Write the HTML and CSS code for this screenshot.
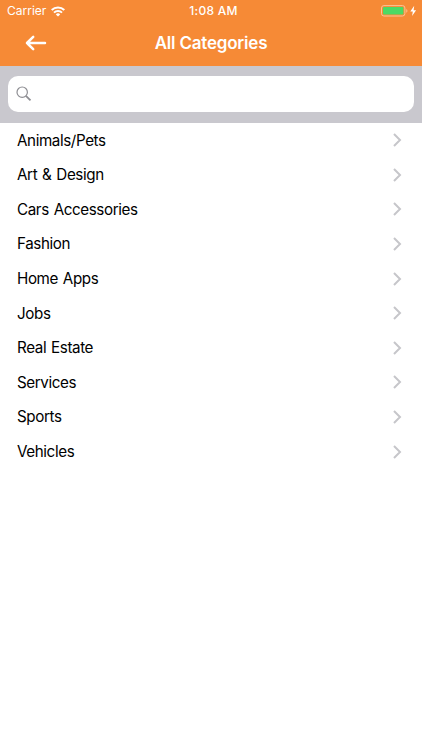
FILE: index.html
```html
<!DOCTYPE html>
<html lang="en">

<head>
  <meta charset="UTF-8" />
  <meta name="viewport" content="width=device-width, initial-scale=1.0" />
  <title>All Categories</title>
  <link rel="stylesheet" href="styles.css">
</head>

<body>
  <svg width="0" height="0" class="sprite">
    <symbol id="chevron" viewBox="0 0 9 14">
      <path d="M1 1l6 6-6 6" fill="none" stroke="#c6c6ca" stroke-width="2" />
    </symbol>
  </svg>
  <header class="header">
    <div class="status">
      <div class="carrier">
        <span>Carrier</span>
        <svg width="14" height="11" viewBox="0 0 14 11" fill="none" stroke="#fff" stroke-width="2">
          <path d="M.7 4a9 9 0 0 1 12.6 0" />
          <path d="M3 6.6a5.7 5.7 0 0 1 8 0" />
          <path d="M7 10.6L4.8 8.4a3.1 3.1 0 0 1 4.4 0z" fill="#fff" stroke="none" />
        </svg>
      </div>
      <div class="time">1:08 AM</div>
      <div class="power">
        <svg width="36" height="12" viewBox="0 0 36 12">
          <rect x=".5" y=".6" width="23.4" height="10.4" rx="2.4" fill="none" stroke="#fbc497" />
          <rect x="2" y="2" width="20.4" height="7.6" rx="1" fill="#4cd964" />
          <path d="M25.3 4v3.8c1.5-.7 1.5-3.1 0-3.8z" fill="#fbc497" />
          <path d="M33.2 .8l-3.9 5.6h2.5l-.7 4.6 4-5.8h-2.5z" fill="#fff" />
        </svg>
      </div>
    </div>
    <nav class="navbar">
      <a class="back">
        <svg width="22" height="16" viewBox="0 0 22 16" fill="none" stroke="#fff" stroke-width="2.5" stroke-linecap="round" stroke-linejoin="round">
          <path d="M20 8H2M8.2 1.8L2 8l6.2 6.2" />
        </svg>
      </a>
      <h1>All Categories</h1>
    </nav>
  </header>
  <div class="search">
    <label class="search-box">
      <svg width="16" height="16" viewBox="0 0 16 16" fill="none" stroke="#8e8e93">
        <circle cx="6.2" cy="6.2" r="5.2" stroke-width="1.2" />
        <path d="M9.9 9.9l4.6 4.5" stroke-width="1.8" />
      </svg>
      <input type="text" />
    </label>
  </div>
  <ul class="categories">
    <li><span>Animals/Pets</span><svg><use href="#chevron" /></svg></li>
    <li><span>Art &amp; Design</span><svg><use href="#chevron" /></svg></li>
    <li><span>Cars Accessories</span><svg><use href="#chevron" /></svg></li>
    <li><span>Fashion</span><svg><use href="#chevron" /></svg></li>
    <li><span>Home Apps</span><svg><use href="#chevron" /></svg></li>
    <li><span>Jobs</span><svg><use href="#chevron" /></svg></li>
    <li><span>Real Estate</span><svg><use href="#chevron" /></svg></li>
    <li><span>Services</span><svg><use href="#chevron" /></svg></li>
    <li><span>Sports</span><svg><use href="#chevron" /></svg></li>
    <li><span>Vehicles</span><svg><use href="#chevron" /></svg></li>
  </ul>
</body>

</html>
```
FILE: styles.css
```css
* {
  box-sizing: border-box;
}

body {
  margin: 0;
  background-color: #fff;
  color: #000;
  font-family: Inter, "Liberation Sans", sans-serif;
}

svg {
  display: block;
  flex: none;
}

.sprite {
  position: absolute;
}

.header {
  height: 66px;
  background-color: #f68a36;
  color: #fff;
}

.status {
  display: grid;
  grid-template-columns: 1fr auto 1fr;
  align-items: center;
  height: 22px;
  padding: 0 5px 0 7px;
  font-size: 12px;
}

.carrier {
  display: flex;
  align-items: center;
  gap: 5px;
}

.carrier span {
  padding-bottom: 1px;
}

.time {
  padding: 0 0 1px 3px;
  font-size: 12px;
  font-weight: 500;
  letter-spacing: 0.3px;
}

.power {
  justify-self: end;
}

.navbar {
  display: grid;
  grid-template-columns: 60px 1fr 60px;
  align-items: center;
  height: 42px;
}

.back {
  padding-left: 25px;
}

.navbar h1 {
  margin: 0;
  font-size: 17px;
  font-weight: 600;
  letter-spacing: -0.2px;
  text-align: center;
}

.search {
  height: 57px;
  padding: 10px 8.4px 0;
  background-color: #c9c8ce;
}

.search-box {
  display: flex;
  align-items: center;
  gap: 8px;
  height: 36px;
  padding: 0 8px;
  border-radius: 10px;
  background-color: #fff;
}

.search-box input {
  flex: 1;
  min-width: 0;
  border: none;
  outline: none;
  background: none;
  font: inherit;
}

.categories {
  margin: 0;
  padding: 0;
  list-style: none;
}

.categories li {
  display: flex;
  align-items: center;
  justify-content: space-between;
  height: 34.6px;
  padding: 0 20px 0 17px;
  font-size: 15.2px;
  letter-spacing: -0.4px;
  word-spacing: 1px;
}

.categories span {
  padding-bottom: 0.3px;
}

.categories svg {
  width: 9px;
  height: 14px;
}
```
